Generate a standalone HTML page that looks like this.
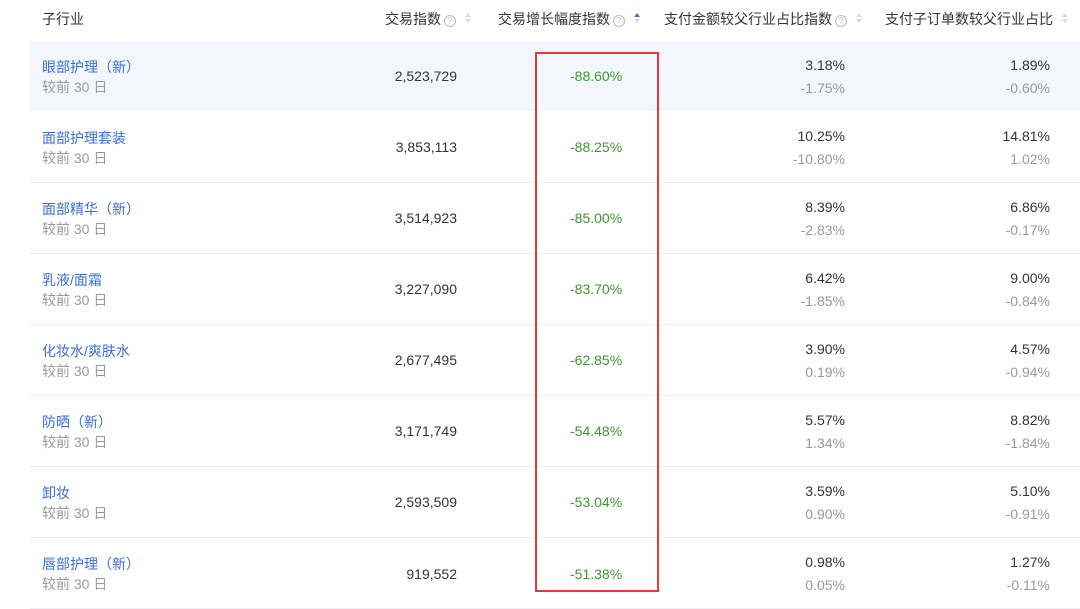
<!DOCTYPE html>
<html><head><meta charset="utf-8"><style>
*{margin:0;padding:0;box-sizing:border-box}
body{width:1080px;height:609px;background:#fff;position:relative;overflow:hidden;font-family:"Liberation Sans","Noto Sans CJK SC",sans-serif;font-size:14px;color:#333}
.a{position:absolute;white-space:nowrap;line-height:20px}
.h{top:9px;color:#333;font-size:14px}
.r{text-align:right}
.q{display:inline-block;width:12px;height:12px;border:1px solid #bbb;border-radius:50%;font-size:8px;line-height:10px;text-align:center;color:#bbb;vertical-align:1px;margin-left:3px}
.s{display:inline-block;width:6px;margin-left:9px;vertical-align:0px;position:relative;height:12px}
.s:before{content:"";position:absolute;left:0;top:1px;border:3px solid transparent;border-bottom:4px solid #d6d9e0;border-top:0}
.s:after{content:"";position:absolute;left:0;top:7px;border:3px solid transparent;border-top:4px solid #d6d9e0;border-bottom:0}
.s.up:before{border-bottom-color:#3b78e7}
.row{position:absolute;left:30px;width:1050px;height:71px;border-bottom:1px solid #eef0f4}
.n{color:#3b6fd4}
.sub{color:#999}
.g{color:#3a9a2e}
.m{color:#999}
</style></head><body>
<div class="a h" style="left:42px">子行业</div>
<div class="a h" style="left:385px">交易指数<span class="q">?</span><span class="s"></span></div>
<div class="a h" style="left:498px">交易增长幅度指数<span class="q">?</span><span class="s up"></span></div>
<div class="a h" style="left:664px">支付金额较父行业占比指数<span class="q">?</span><span class="s"></span></div>
<div class="a h" style="left:885px">支付子订单数较父行业占比<span class="s"></span></div>

<div class="row" style="top:41px;background:#f3f7fd;border-bottom-color:#fff"></div>
<div class="row" style="top:112px"></div>
<div class="row" style="top:183px"></div>
<div class="row" style="top:254px"></div>
<div class="row" style="top:325px"></div>
<div class="row" style="top:396px"></div>
<div class="row" style="top:467px"></div>
<div class="row" style="top:538px"></div>

<div style="position:absolute;left:535px;top:52px;width:124px;height:540px;border:2px solid #e53935"></div>

<div class="a n" style="left:42px;top:57px">眼部护理（新）</div><div class="a sub" style="left:42px;top:77px">较前 30 日</div>
<div class="a r" style="right:623px;top:66px">2,523,729</div><div class="a g" style="left:570px;top:66px">-88.60%</div>
<div class="a r" style="right:235px;top:55px">3.18%</div><div class="a r m" style="right:235px;top:78px">-1.75%</div>
<div class="a r" style="right:30px;top:55px">1.89%</div><div class="a r m" style="right:30px;top:78px">-0.60%</div>

<div class="a n" style="left:42px;top:128px">面部护理套装</div><div class="a sub" style="left:42px;top:148px">较前 30 日</div>
<div class="a r" style="right:623px;top:137px">3,853,113</div><div class="a g" style="left:570px;top:137px">-88.25%</div>
<div class="a r" style="right:235px;top:126px">10.25%</div><div class="a r m" style="right:235px;top:149px">-10.80%</div>
<div class="a r" style="right:30px;top:126px">14.81%</div><div class="a r m" style="right:30px;top:149px">1.02%</div>

<div class="a n" style="left:42px;top:199px">面部精华（新）</div><div class="a sub" style="left:42px;top:219px">较前 30 日</div>
<div class="a r" style="right:623px;top:208px">3,514,923</div><div class="a g" style="left:570px;top:208px">-85.00%</div>
<div class="a r" style="right:235px;top:197px">8.39%</div><div class="a r m" style="right:235px;top:220px">-2.83%</div>
<div class="a r" style="right:30px;top:197px">6.86%</div><div class="a r m" style="right:30px;top:220px">-0.17%</div>

<div class="a n" style="left:42px;top:270px">乳液/面霜</div><div class="a sub" style="left:42px;top:290px">较前 30 日</div>
<div class="a r" style="right:623px;top:279px">3,227,090</div><div class="a g" style="left:570px;top:279px">-83.70%</div>
<div class="a r" style="right:235px;top:268px">6.42%</div><div class="a r m" style="right:235px;top:291px">-1.85%</div>
<div class="a r" style="right:30px;top:268px">9.00%</div><div class="a r m" style="right:30px;top:291px">-0.84%</div>

<div class="a n" style="left:42px;top:341px">化妆水/爽肤水</div><div class="a sub" style="left:42px;top:361px">较前 30 日</div>
<div class="a r" style="right:623px;top:350px">2,677,495</div><div class="a g" style="left:570px;top:350px">-62.85%</div>
<div class="a r" style="right:235px;top:339px">3.90%</div><div class="a r m" style="right:235px;top:362px">0.19%</div>
<div class="a r" style="right:30px;top:339px">4.57%</div><div class="a r m" style="right:30px;top:362px">-0.94%</div>

<div class="a n" style="left:42px;top:412px">防晒（新）</div><div class="a sub" style="left:42px;top:432px">较前 30 日</div>
<div class="a r" style="right:623px;top:421px">3,171,749</div><div class="a g" style="left:570px;top:421px">-54.48%</div>
<div class="a r" style="right:235px;top:410px">5.57%</div><div class="a r m" style="right:235px;top:433px">1.34%</div>
<div class="a r" style="right:30px;top:410px">8.82%</div><div class="a r m" style="right:30px;top:433px">-1.84%</div>

<div class="a n" style="left:42px;top:483px">卸妆</div><div class="a sub" style="left:42px;top:503px">较前 30 日</div>
<div class="a r" style="right:623px;top:492px">2,593,509</div><div class="a g" style="left:570px;top:492px">-53.04%</div>
<div class="a r" style="right:235px;top:481px">3.59%</div><div class="a r m" style="right:235px;top:504px">0.90%</div>
<div class="a r" style="right:30px;top:481px">5.10%</div><div class="a r m" style="right:30px;top:504px">-0.91%</div>

<div class="a n" style="left:42px;top:554px">唇部护理（新）</div><div class="a sub" style="left:42px;top:574px">较前 30 日</div>
<div class="a r" style="right:623px;top:564px">919,552</div><div class="a g" style="left:570px;top:564px">-51.38%</div>
<div class="a r" style="right:235px;top:552px">0.98%</div><div class="a r m" style="right:235px;top:575px">0.05%</div>
<div class="a r" style="right:30px;top:552px">1.27%</div><div class="a r m" style="right:30px;top:575px">-0.11%</div>
</body></html>
